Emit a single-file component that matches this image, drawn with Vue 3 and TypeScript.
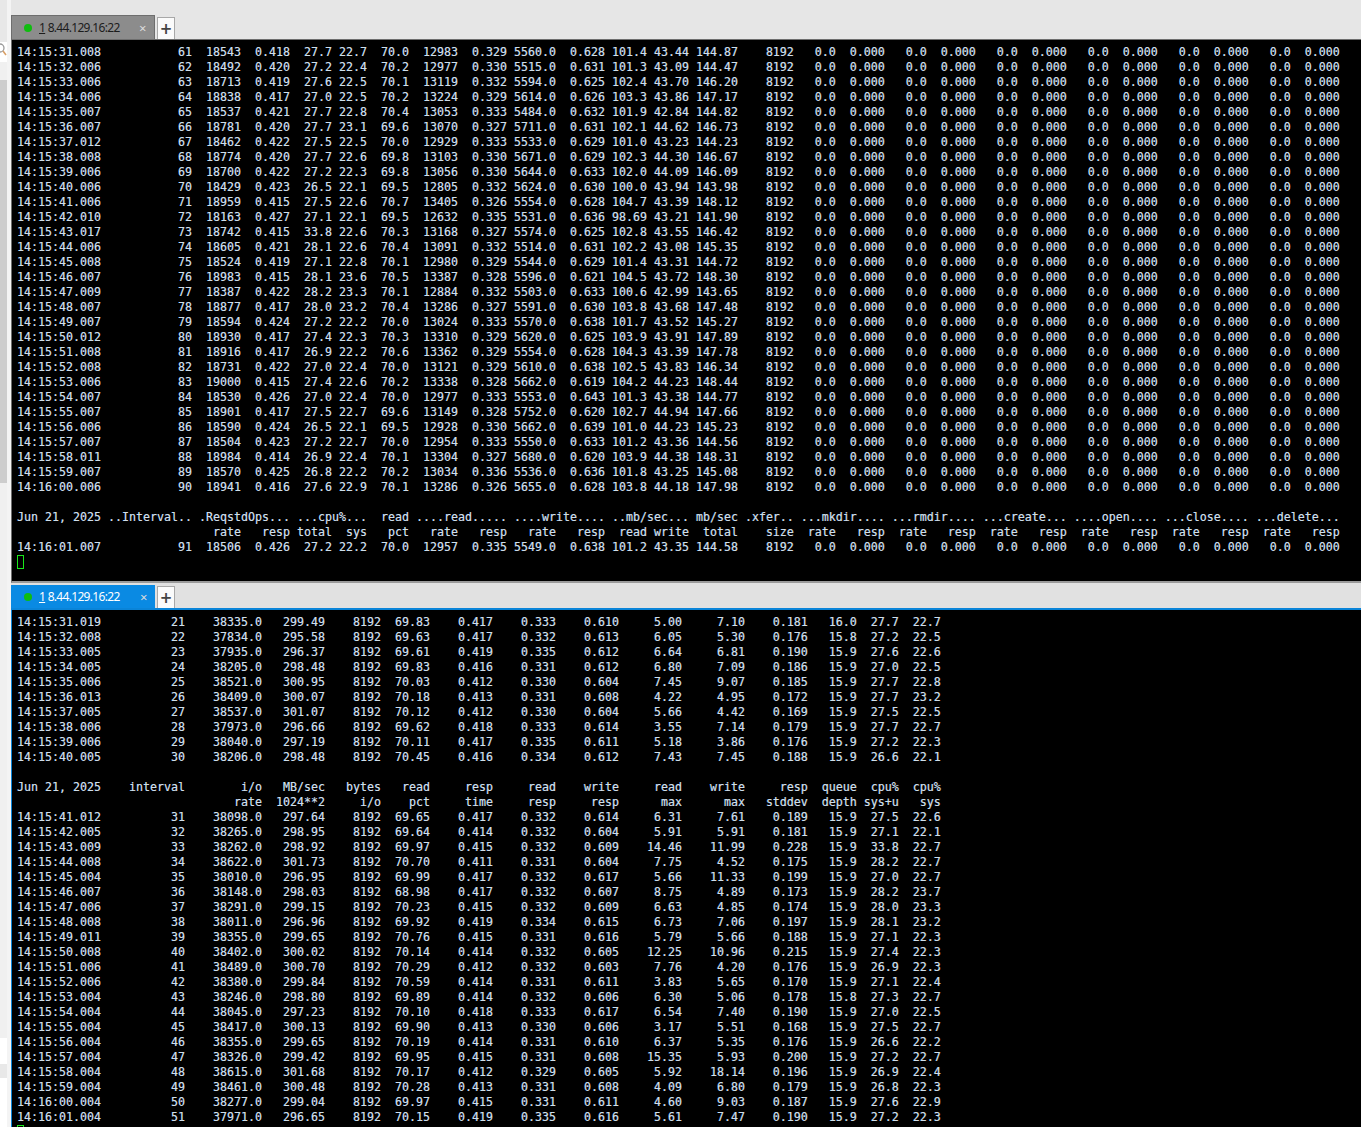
<script setup lang="ts">
const pad = (cells: string[], widths: number[]): string =>
  cells.map((c, i) => c.padStart(widths[i])).join('')

const topWidths = [12, 13, 7, 7, 6, 5, 6, 7, 7, 7, 7, 6, 6, 7, 8, 6, 7, 6, 7, 6, 7, 6, 7, 6, 7, 6, 7]
const botWidths = [12, 12, 11, 9, 8, 7, 9, 9, 9, 9, 9, 9, 7, 6, 6]

const topRaw = `14:15:31.008 61 18543 0.418 27.7 22.7 70.0 12983 0.329 5560.0 0.628 101.4 43.44 144.87
14:15:32.006 62 18492 0.420 27.2 22.4 70.2 12977 0.330 5515.0 0.631 101.3 43.09 144.47
14:15:33.006 63 18713 0.419 27.6 22.5 70.1 13119 0.332 5594.0 0.625 102.4 43.70 146.20
14:15:34.006 64 18838 0.417 27.0 22.5 70.2 13224 0.329 5614.0 0.626 103.3 43.86 147.17
14:15:35.007 65 18537 0.421 27.7 22.8 70.4 13053 0.333 5484.0 0.632 101.9 42.84 144.82
14:15:36.007 66 18781 0.420 27.7 23.1 69.6 13070 0.327 5711.0 0.631 102.1 44.62 146.73
14:15:37.012 67 18462 0.422 27.5 22.5 70.0 12929 0.333 5533.0 0.629 101.0 43.23 144.23
14:15:38.008 68 18774 0.420 27.7 22.6 69.8 13103 0.330 5671.0 0.629 102.3 44.30 146.67
14:15:39.006 69 18700 0.422 27.2 22.3 69.8 13056 0.330 5644.0 0.633 102.0 44.09 146.09
14:15:40.006 70 18429 0.423 26.5 22.1 69.5 12805 0.332 5624.0 0.630 100.0 43.94 143.98
14:15:41.006 71 18959 0.415 27.5 22.6 70.7 13405 0.326 5554.0 0.628 104.7 43.39 148.12
14:15:42.010 72 18163 0.427 27.1 22.1 69.5 12632 0.335 5531.0 0.636 98.69 43.21 141.90
14:15:43.017 73 18742 0.415 33.8 22.6 70.3 13168 0.327 5574.0 0.625 102.8 43.55 146.42
14:15:44.006 74 18605 0.421 28.1 22.6 70.4 13091 0.332 5514.0 0.631 102.2 43.08 145.35
14:15:45.008 75 18524 0.419 27.1 22.8 70.1 12980 0.329 5544.0 0.629 101.4 43.31 144.72
14:15:46.007 76 18983 0.415 28.1 23.6 70.5 13387 0.328 5596.0 0.621 104.5 43.72 148.30
14:15:47.009 77 18387 0.422 28.2 23.3 70.1 12884 0.332 5503.0 0.633 100.6 42.99 143.65
14:15:48.007 78 18877 0.417 28.0 23.2 70.4 13286 0.327 5591.0 0.630 103.8 43.68 147.48
14:15:49.007 79 18594 0.424 27.2 22.2 70.0 13024 0.333 5570.0 0.638 101.7 43.52 145.27
14:15:50.012 80 18930 0.417 27.4 22.3 70.3 13310 0.329 5620.0 0.625 103.9 43.91 147.89
14:15:51.008 81 18916 0.417 26.9 22.2 70.6 13362 0.329 5554.0 0.628 104.3 43.39 147.78
14:15:52.008 82 18731 0.422 27.0 22.4 70.0 13121 0.329 5610.0 0.638 102.5 43.83 146.34
14:15:53.006 83 19000 0.415 27.4 22.6 70.2 13338 0.328 5662.0 0.619 104.2 44.23 148.44
14:15:54.007 84 18530 0.426 27.0 22.4 70.0 12977 0.333 5553.0 0.643 101.3 43.38 144.77
14:15:55.007 85 18901 0.417 27.5 22.7 69.6 13149 0.328 5752.0 0.620 102.7 44.94 147.66
14:15:56.006 86 18590 0.424 26.5 22.1 69.5 12928 0.330 5662.0 0.639 101.0 44.23 145.23
14:15:57.007 87 18504 0.423 27.2 22.7 70.0 12954 0.333 5550.0 0.633 101.2 43.36 144.56
14:15:58.011 88 18984 0.414 26.9 22.4 70.1 13304 0.327 5680.0 0.620 103.9 44.38 148.31
14:15:59.007 89 18570 0.425 26.8 22.2 70.2 13034 0.336 5536.0 0.636 101.8 43.25 145.08
14:16:00.006 90 18941 0.416 27.6 22.9 70.1 13286 0.326 5655.0 0.628 103.8 44.18 147.98`

const emptyOps = Array(6).fill('0.0 0.000').join(' ')
const topRow = (raw: string): string => pad(`${raw} 8192 ${emptyOps}`.split(' '), topWidths)

const botA = `14:15:31.019 21 38335.0 299.49 8192 69.83 0.417 0.333 0.610 5.00 7.10 0.181 16.0 27.7 22.7
14:15:32.008 22 37834.0 295.58 8192 69.63 0.417 0.332 0.613 6.05 5.30 0.176 15.8 27.2 22.5
14:15:33.005 23 37935.0 296.37 8192 69.61 0.419 0.335 0.612 6.64 6.81 0.190 15.9 27.6 22.6
14:15:34.005 24 38205.0 298.48 8192 69.83 0.416 0.331 0.612 6.80 7.09 0.186 15.9 27.0 22.5
14:15:35.006 25 38521.0 300.95 8192 70.03 0.412 0.330 0.604 7.45 9.07 0.185 15.9 27.7 22.8
14:15:36.013 26 38409.0 300.07 8192 70.18 0.413 0.331 0.608 4.22 4.95 0.172 15.9 27.7 23.2
14:15:37.005 27 38537.0 301.07 8192 70.12 0.412 0.330 0.604 5.66 4.42 0.169 15.9 27.5 22.5
14:15:38.006 28 37973.0 296.66 8192 69.62 0.418 0.333 0.614 3.55 7.14 0.179 15.9 27.7 22.7
14:15:39.006 29 38040.0 297.19 8192 70.11 0.417 0.335 0.611 5.18 3.86 0.176 15.9 27.2 22.3
14:15:40.005 30 38206.0 298.48 8192 70.45 0.416 0.334 0.612 7.43 7.45 0.188 15.9 26.6 22.1`

const botB = `14:15:41.012 31 38098.0 297.64 8192 69.65 0.417 0.332 0.614 6.31 7.61 0.189 15.9 27.5 22.6
14:15:42.005 32 38265.0 298.95 8192 69.64 0.414 0.332 0.604 5.91 5.91 0.181 15.9 27.1 22.1
14:15:43.009 33 38262.0 298.92 8192 69.97 0.415 0.332 0.609 14.46 11.99 0.228 15.9 33.8 22.7
14:15:44.008 34 38622.0 301.73 8192 70.70 0.411 0.331 0.604 7.75 4.52 0.175 15.9 28.2 22.7
14:15:45.004 35 38010.0 296.95 8192 69.99 0.417 0.332 0.617 5.66 11.33 0.199 15.9 27.0 22.7
14:15:46.007 36 38148.0 298.03 8192 68.98 0.417 0.332 0.607 8.75 4.89 0.173 15.9 28.2 23.7
14:15:47.006 37 38291.0 299.15 8192 70.23 0.415 0.332 0.609 6.63 4.85 0.174 15.9 28.0 23.3
14:15:48.008 38 38011.0 296.96 8192 69.92 0.419 0.334 0.615 6.73 7.06 0.197 15.9 28.1 23.2
14:15:49.011 39 38355.0 299.65 8192 70.76 0.415 0.331 0.616 5.79 5.66 0.188 15.9 27.1 22.3
14:15:50.008 40 38402.0 300.02 8192 70.14 0.414 0.332 0.605 12.25 10.96 0.215 15.9 27.4 22.3
14:15:51.006 41 38489.0 300.70 8192 70.29 0.412 0.332 0.603 7.76 4.20 0.176 15.9 26.9 22.3
14:15:52.006 42 38380.0 299.84 8192 70.59 0.414 0.331 0.611 3.83 5.65 0.170 15.9 27.1 22.4
14:15:53.004 43 38246.0 298.80 8192 69.89 0.414 0.332 0.606 6.30 5.06 0.178 15.8 27.3 22.7
14:15:54.004 44 38045.0 297.23 8192 70.10 0.418 0.333 0.617 6.54 7.40 0.190 15.9 27.0 22.5
14:15:55.004 45 38417.0 300.13 8192 69.90 0.413 0.330 0.606 3.17 5.51 0.168 15.9 27.5 22.7
14:15:56.004 46 38355.0 299.65 8192 70.19 0.414 0.331 0.610 6.37 5.35 0.176 15.9 26.6 22.2
14:15:57.004 47 38326.0 299.42 8192 69.95 0.415 0.331 0.608 15.35 5.93 0.200 15.9 27.2 22.7
14:15:58.004 48 38615.0 301.68 8192 70.17 0.412 0.329 0.605 5.92 18.14 0.196 15.9 26.9 22.4
14:15:59.004 49 38461.0 300.48 8192 70.28 0.413 0.331 0.608 4.09 6.80 0.179 15.9 26.8 22.3
14:16:00.004 50 38277.0 299.04 8192 69.97 0.415 0.331 0.611 4.60 9.03 0.187 15.9 27.6 22.9
14:16:01.004 51 37971.0 296.65 8192 70.15 0.419 0.335 0.616 5.61 7.47 0.190 15.9 27.2 22.3`

const botRow = (raw: string): string => pad(raw.split(' '), botWidths)

const topHeadCells = [
  'Jun 21, 2025', '..Interval..', '.ReqstdOps...', '...cpu%...', 'read', '....read.....',
  '....write....', '..mb/sec...', 'mb/sec', '.xfer..', '...mkdir....', '...rmdir....',
  '...create...', '....open....', '...close....', '...delete...',
]
const topHeadWidths = [12, 13, 14, 11, 6, 14, 14, 12, 7, 8, 13, 13, 13, 13, 13, 13]
const topSub = ['', 'rate', 'resp', 'total', 'sys', 'pct', 'rate', 'resp', 'rate', 'resp', 'read', 'write', 'total', 'size',
  'rate', 'resp', 'rate', 'resp', 'rate', 'resp', 'rate', 'resp', 'rate', 'resp', 'rate', 'resp']
const topSubWidths = [25, 7, 7, 6, 5, 6, 7, 7, 7, 7, 6, 6, 7, 8, 6, 7, 6, 7, 6, 7, 6, 7, 6, 7, 6, 7]

const botHead1 = ['Jun 21, 2025', 'interval', 'i/o', 'MB/sec', 'bytes', 'read', 'resp', 'read', 'write', 'read', 'write', 'resp', 'queue', 'cpu%', 'cpu%']
const botHead2 = ['', '', 'rate', '1024**2', 'i/o', 'pct', 'time', 'resp', 'resp', 'max', 'max', 'stddev', 'depth', 'sys+u', 'sys']

const topText = [
  ...topRaw.split('\n').map(topRow),
  '',
  pad(topHeadCells, topHeadWidths),
  pad(topSub, topSubWidths),
  topRow('14:16:01.007 91 18506 0.426 27.2 22.2 70.0 12957 0.335 5549.0 0.638 101.2 43.35 144.58'),
].join('\n')

const botText = [
  ...botA.split('\n').map(botRow),
  '',
  pad(botHead1, botWidths),
  pad(botHead2, botWidths),
  ...botB.split('\n').map(botRow),
].join('\n')

const tabLabel = '8.44.129.16:22'
</script>

<template>
  <div class="shell">
    <aside class="rail">
      <div class="rail-col">
        <div class="r-head"></div>
        <div class="r-search">
          <svg width="8" height="16" viewBox="0 0 8 16">
            <circle cx="0" cy="6" r="4" fill="none" stroke="#9a9a9a" stroke-width="1.3" />
            <path d="M3 9l3 4" stroke="#d9a066" stroke-width="1.6" />
          </svg>
        </div>
        <div class="r-arrow"></div>
        <div class="r-tree"></div>
        <div class="r-blank"></div>
        <div class="r-chev"></div>
        <div class="r-white"></div>
        <div class="r-grey"></div>
        <div class="r-end"></div>
      </div>
    </aside>
    <main class="panes">
      <section class="pane top">
        <header class="bar">
          <div class="tab idle">
            <span class="dot"></span>
            <span class="label"><u>1</u> {{ tabLabel }}</span>
            <span class="close">×</span>
          </div>
          <button class="add">+</button>
        </header>
        <div class="term"><pre class="out">{{ topText }}</pre><span class="cursor"></span></div>
      </section>
      <section class="pane bottom">
        <header class="bar">
          <div class="tab active">
            <span class="dot"></span>
            <span class="label"><u>1</u> {{ tabLabel }}</span>
            <span class="close">×</span>
          </div>
          <button class="add">+</button>
        </header>
        <div class="term"><pre class="out">{{ botText }}</pre><span class="cursor"></span></div>
      </section>
    </main>
  </div>
</template>

<style>
html, body { margin: 0; background: #e6e6e6; }
</style>

<style scoped>
.shell { display: flex; width: 1361px; height: 1127px; overflow: hidden; background: #e6e6e6; }
.rail { width: 11px; flex: none; background: #f4f4f4; }
.rail-col { width: 7px; display: flex; flex-direction: column; height: 100%; }
.r-head { height: 42px; background: #e8e8e8; }
.r-search { height: 20px; background: #fff; overflow: hidden; }
.r-search svg { display: block; }
.r-arrow { height: 18px; background: #f0f0f0; }
.r-tree { height: 403px; background: #cdcdcd; }
.r-blank { flex: 1; background: #f0f0f0; }
.r-chev { height: 14px; background: #f0f0f0; }
.r-white { height: 26px; background: #fff; }
.r-grey { height: 14px; background: #e8e8e8; }
.r-end { height: 49px; background: #fff; }

.panes { flex: 1; min-width: 0; display: flex; flex-direction: column; }
.pane { display: flex; flex-direction: column; min-height: 0; }
.pane.top { height: 583px; }
.pane.bottom { flex: 1; }

.bar { display: flex; align-items: flex-end; gap: 2px; background: #e6e6e6; flex: none; box-sizing: border-box; }
.top .bar { height: 40px; border-bottom: 1px solid #6e6e6e; }
.bottom .bar { height: 27px; border-bottom: 2px solid #0a84d8; background: #e1e1e1; }

.tab { display: flex; align-items: center; box-sizing: border-box; width: 144px; padding-left: 12px; font-family: "Noto Sans", sans-serif; font-size: 12px; letter-spacing: -0.68px; }
.tab.idle { height: 24px; background: #8c8c8c; color: #1c1c1c; border: 1px solid #6e6e6e; border-bottom: 0; }
.tab.active { height: 23px; background: #0a8ae3; color: #fff; padding-left: 13px; }
.dot { width: 8px; height: 8px; border-radius: 50%; background: #0fbd0f; margin-right: 7px; flex: none; }
.label { flex: 1; white-space: nowrap; }
.close { font-size: 13px; width: 15px; letter-spacing: 0; color: #dcdcdc; }
.add { width: 18px; height: 22px; padding: 0; background: #fbfbfb; border: 1px solid #a8a8a8; border-bottom: 0; font-family: "DejaVu Sans", sans-serif; font-size: 15px; font-weight: 700; line-height: 20px; color: #444; }

.term { flex: 1; position: relative; background: #000; padding: 5px 0 0 5px; min-height: 0; overflow: hidden; }
.top .term { border-left: 1px solid #6e6e6e; border-bottom: 2px solid #9a9a9a; }
.bottom .term { border-left: 1px solid #0a84d8; }
.out { margin: 0; font-family: "DejaVu Sans Mono", monospace; font-size: 11.63px; line-height: 15px; color: #cfdeeb; white-space: pre; text-shadow: -0.3px 0 rgba(70, 140, 210, 0.55), 0.3px 0 rgba(210, 160, 90, 0.45); }
.cursor { display: block; box-sizing: border-box; width: 7px; height: 14px; border: 1px solid #19e619; }
</style>
